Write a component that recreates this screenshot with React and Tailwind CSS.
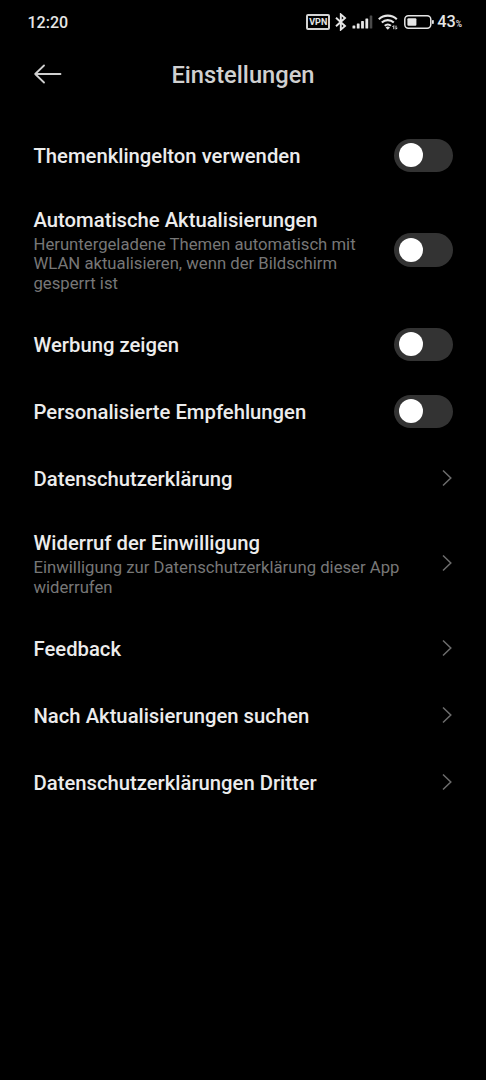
const settings = [
  { title: 'Themenklingelton verwenden', type: 'switch', height: 'h-[67px]' },
  {
    title: 'Automatische Aktualisierungen',
    lines: ['Heruntergeladene Themen automatisch mit', 'WLAN aktualisieren, wenn der Bildschirm', 'gesperrt ist'],
    type: 'switch',
    height: 'h-[122px]',
  },
  { title: 'Werbung zeigen', type: 'switch', height: 'h-[67px]' },
  { title: 'Personalisierte Empfehlungen', type: 'switch', height: 'h-[67px]' },
  { title: 'Datenschutzerklärung', type: 'link', height: 'h-[67px]' },
  {
    title: 'Widerruf der Einwilligung',
    lines: ['Einwilligung zur Datenschutzerklärung dieser App', 'widerrufen'],
    type: 'link',
    height: 'h-[103px]',
  },
  { title: 'Feedback', type: 'link', height: 'h-[67px]' },
  { title: 'Nach Aktualisierungen suchen', type: 'link', height: 'h-[67px]' },
  { title: 'Datenschutzerklärungen Dritter', type: 'link', height: 'h-[67px]' },
];

function StatusBar() {
  return (
    <div className="flex h-11 items-center justify-between pl-[27.5px] pr-6 text-[#e6e6e6]">
      <span className="pt-0.5 text-[16px] leading-5 font-medium">12:20</span>
      <div className="flex items-center">
        <span className="flex h-4 w-6 items-center justify-center rounded-[2px] border-2 border-[#d4d4d4] text-[9px] leading-none font-bold">
          VPN
        </span>
        {/* bluetooth */}
        <svg className="ml-[5px] mb-px" width="12" height="18" viewBox="0 0 12 18" fill="none" stroke="currentColor" strokeWidth="1.9">
          <path d="M1 4.8l9 8.2-4.2 3.6V1.4L10 5l-9 8.2" />
        </svg>
        {/* signal */}
        <svg className="ml-[5px]" width="21" height="14" viewBox="0 0 21 14" fill="currentColor">
          <rect x="0.5" y="10.5" width="2.8" height="3" rx="0.6" />
          <rect x="4.8" y="8.5" width="2.8" height="5" rx="0.6" />
          <rect x="9.1" y="6" width="2.8" height="7.5" rx="0.6" />
          <rect x="13.4" y="3.5" width="2.8" height="10" rx="0.6" />
          <rect x="17.7" y="0.5" width="2.6" height="13" rx="0.6" fill="#4a4a4a" />
        </svg>
        {/* wifi */}
        <svg className="ml-[5px]" width="20" height="16" viewBox="0 0 20 16" fill="none" stroke="currentColor" strokeWidth="2.1">
          <path d="M0.8 5.2a13.2 13.2 0 0 1 18 0M3.8 8.5a8.8 8.8 0 0 1 12 0M6.7 11.8a4.8 4.8 0 0 1 6.2 0" />
          <path d="M9.8 15.8l-2.2-2.4a3.6 3.6 0 0 1 4.4 0z" fill="currentColor" stroke="none" />
          <path d="M15.8 11.6v3.6M14.4 13l1.4-1.4M18 15.2v-3.6M19.4 13.8L18 15.2" strokeWidth="1" />
        </svg>
        {/* battery */}
        <svg className="ml-[6px]" width="30" height="14" viewBox="0 0 30 14" fill="none">
          <rect x="0.8" y="0.8" width="26" height="12.4" rx="3.6" stroke="#e6e6e6" strokeWidth="1.5" />
          <rect x="3.4" y="3.2" width="9" height="7.6" rx="1" fill="#e6e6e6" />
          <rect x="28" y="5" width="1.8" height="4" rx="0.8" fill="#e6e6e6" />
        </svg>
        <span className="ml-[3px] pt-0.5 text-[16.3px] leading-5 font-medium">
          43<span className="text-[8.5px]">%</span>
        </span>
      </div>
    </div>
  );
}

function Switch() {
  return (
    <button role="switch" aria-checked="false" className="mb-[0.5px] flex h-[33.5px] w-[59px] shrink-0 items-center rounded-full bg-[#333333] pl-[4.5px]">
      <span className="size-6 rounded-full bg-white" />
    </button>
  );
}

function Chevron() {
  return (
    <svg className="mb-px shrink-0" width="12" height="18" viewBox="0 0 12 18" fill="none" stroke="#6c6c6c" strokeWidth="1.5">
      <path d="M2 1.5L9.8 9L2 16.5" />
    </svg>
  );
}

function SettingRow({ title, lines, type, height }) {
  return (
    <li className={`flex items-center justify-between pl-[33.5px] pr-[33px] ${height}`}>
      <div className="whitespace-nowrap pt-px">
        <h2 className="text-[20.25px] leading-6 font-medium text-[#ececec]">{title}</h2>
        {lines && (
          <p className="pt-[3px] text-[16.7px] leading-[19.6px] text-[#777777]">
            {lines.map((line) => (
              <span key={line} className="block">{line}</span>
            ))}
          </p>
        )}
      </div>
      {type === 'switch' ? <Switch /> : <Chevron />}
    </li>
  );
}

export default function App() {
  return (
    <div className="h-[1080px] w-[486px] overflow-hidden bg-black font-['Roboto',sans-serif]">
      <StatusBar />
      <header className="grid h-[78px] grid-cols-[74px_1fr_74px] items-start pt-[15px]">
        <button aria-label="Zurück" className="flex h-[30px] items-center pl-[34px]">
          <svg width="28" height="20" viewBox="0 0 28 20" fill="none" stroke="#d0d0d0" strokeWidth="1.8" strokeLinecap="round" strokeLinejoin="round">
            <path d="M10 1.5L1.2 10L10 18.5M1.2 10H26.5" />
          </svg>
        </button>
        <h1 className="pt-px text-center text-[23.7px] leading-[30px] font-medium text-[#d0d0d0]">Einstellungen</h1>
      </header>
      <ul>
        {settings.map((item) => (
          <SettingRow key={item.title} {...item} />
        ))}
      </ul>
    </div>
  );
}
